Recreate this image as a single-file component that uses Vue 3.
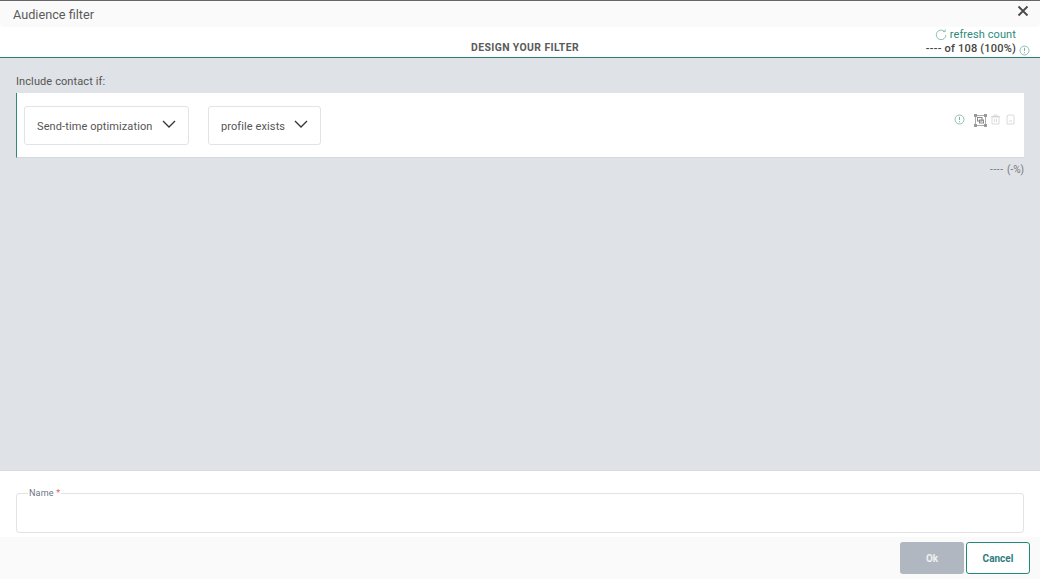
<script setup>
</script>

<template>
  <div class="page">
    <header class="title-bar">
      <span class="title">Audience filter</span>
      <svg class="close" width="12" height="12" viewBox="0 0 12 12"><path d="M1.5 1.5l9 9M10.5 1.5l-9 9" stroke="#4a4a4a" stroke-width="1.8" fill="none"/></svg>
    </header>
    <div class="sub-bar">
      <span class="design">DESIGN YOUR FILTER</span>
      <div class="count">
        <div class="refresh">
          <svg width="12" height="12" viewBox="0 0 12 12" fill="none"><path d="M9.4 2.4A4.8 4.8 0 1 0 10.9 6" stroke="#6fb0a4" stroke-width=".8"/><path d="M8 2.6h2.2V.4" stroke="#6fb0a4" stroke-width=".8"/></svg>
          <span>refresh count</span>
        </div>
        <div class="of">
          <span>---- of 108 (100%)</span>
          <svg width="11" height="11" viewBox="0 0 11 11" fill="none"><circle cx="5.5" cy="5.5" r="4.5" stroke="#6fb0a4" stroke-width=".8"/><path d="M5.5 2.8v3.2M5.5 7.2v1" stroke="#8fa8a2"/></svg>
        </div>
      </div>
    </div>
    <main class="canvas">
      <div class="include">Include contact if:</div>
      <section class="rule">
        <div class="selects">
          <div class="select s1"><span>Send-time optimization</span>
            <svg width="14" height="8" viewBox="0 0 14 8" fill="none"><path d="M1 1l6 6 6-6" stroke="#333" stroke-width="1.3"/></svg></div>
          <div class="select s2"><span>profile exists</span>
            <svg width="14" height="8" viewBox="0 0 14 8" fill="none"><path d="M1 1l6 6 6-6" stroke="#333" stroke-width="1.3"/></svg></div>
        </div>
        <div class="tools">
          <svg width="11" height="11" viewBox="0 0 11 11" fill="none"><circle cx="5.5" cy="5.5" r="4.5" stroke="#6fb0a4" stroke-width=".8"/><path d="M5.5 2.8v3.2M5.5 7.2v1" stroke="#8fa8a2"/></svg>
          <svg class="tool-frame" width="13" height="13" viewBox="0 0 13 13" fill="none"><rect x="1.5" y="1.5" width="10" height="10" stroke="#aaa"/><rect x="0" y="0" width="3" height="3" fill="#999"/><rect x="10" y="0" width="3" height="3" fill="#999"/><rect x="0" y="10" width="3" height="3" fill="#999"/><rect x="10" y="10" width="3" height="3" fill="#999"/><rect x="3.5" y="3.5" width="4.5" height="3.5" stroke="#888"/><rect x="5.5" y="6" width="4" height="3" stroke="#888"/></svg>
          <svg class="tool-trash" width="9" height="11" viewBox="0 0 9 11" fill="none"><path d="M1 3h7v7H1zM0 2.5h9M3 2.5V1h3v1.5M3.5 5v3M5.5 5v3" stroke="#d0d0d0" stroke-width=".8"/></svg>
          <svg class="tool-copy" width="9" height="11" viewBox="0 0 9 11" fill="none"><path d="M2 1h5l1 1v8H1V2zM3 7h3" stroke="#d0d0d0" stroke-width=".8"/></svg>
        </div>
      </section>
      <div class="rule-count"><span class="dashes">----</span> (-%)</div>
    </main>
    <section class="name-area">
      <fieldset class="name-field">
        <legend>Name <em>*</em></legend>
      </fieldset>
    </section>
    <footer class="actions">
      <button class="ok" type="button">Ok</button>
      <button class="cancel" type="button">Cancel</button>
    </footer>
  </div>
</template>

<style>
html, body { margin: 0; background: #fff; }
</style>

<style scoped>
.page {
  width: 1040px; height: 579px; display: flex; flex-direction: column; overflow: hidden;
  font-family: Roboto, "Liberation Sans", sans-serif; color: #555; background: #fff;
}
.title-bar {
  height: 27px; flex: none; box-sizing: border-box; border-top: 1px solid #666; background: #fafafa;
  border-radius: 0 0 4px 4px; display: flex; align-items: center; justify-content: space-between;
  padding: 0 11px 0 13px;
}
.title { font-size: 12.7px; color: #5a5a5a; }
.close { margin-top: -7px; }
.sub-bar {
  height: 31px; flex: none; box-sizing: border-box; border-bottom: 1px solid #2f7d6f; display: flex;
  justify-content: flex-end; position: relative; padding-right: 10px;
}
.design {
  position: absolute; left: 16px; right: 0; top: 15px; text-align: center; font-size: 10.4px; font-weight: 700;
  color: #5a5a5a; letter-spacing: .4px; line-height: 12px; margin-right: 6px;
}
.count { display: flex; flex-direction: column; align-items: flex-end; font-size: 11px; line-height: 14px; padding-top: 1px; }
.refresh { display: flex; align-items: center; gap: 3px; color: #2b8a7a; margin-right: 14px; letter-spacing: .1px; height: 13px; }
.of { display: flex; align-items: center; gap: 3px; color: #444; font-weight: 500; letter-spacing: .2px; margin-top: 1px; }
.of svg { margin-top: 3px; }
.canvas {
  height: 413px; flex: none; box-sizing: border-box; background: #dfe2e6; padding: 17px 16px 0; border-bottom: 1px solid #d8dadf;
}
.include { font-size: 11px; line-height: 14px; color: #555; margin-bottom: 4px; letter-spacing: .1px; }
.rule {
  height: 65px; box-sizing: border-box; background: #fff; border-left: 1px solid #2f8a7a; border-bottom: 1px solid #d5d7dc;
  display: flex; justify-content: space-between; padding: 13px 0 0 7px;
}
.selects { display: flex; gap: 19px; }
.select {
  height: 39px; box-sizing: border-box; border: 1px solid #e2e3e6; border-radius: 3px; display: flex; align-items: center;
  font-size: 11px; color: #555; padding: 0 12px; justify-content: space-between; letter-spacing: .1px;
}
.select span { margin-top: 1px; }
.select svg { margin-top: -4px; }
.s1 { width: 165px; }
.s2 { width: 113px; }
.tools { display: flex; align-items: flex-start; padding: 8px 9px 0 0; }
.tool-frame { margin-left: 9px; }
.tool-trash { margin-left: 4px; }
.tool-copy { margin-left: 6px; }
.rule-count { text-align: right; font-size: 10px; color: #777; line-height: 12px; margin-top: 6px; }
.dashes { letter-spacing: .6px; margin-right: 1px; }
.name-area { height: 66px; flex: none; box-sizing: border-box; padding: 17px 16px 0; }
.name-field {
  margin: 0; padding: 0 11px; height: 45px; box-sizing: border-box; border: 1px solid #e2e3e6; border-radius: 3px; min-width: 0;
}
legend { font-size: 9px; color: #6b7688; padding: 0 1px; line-height: 11px; letter-spacing: .2px; }
legend em { color: #e8605f; font-style: normal; }
.actions {
  flex: 1; background: #fafafa; display: flex; justify-content: flex-end; gap: 2px; padding: 5px 10px 0 0;
}
button {
  width: 64px; height: 32px; box-sizing: border-box; border-radius: 3px; font-family: inherit; font-size: 10px; font-weight: 700; padding: 0;
}
.ok { background: #b0b7c0; border: none; color: #eef0f2; }
.cancel { background: #fff; border: 1px solid #1f8a78; color: #2f7d80; }
</style>
